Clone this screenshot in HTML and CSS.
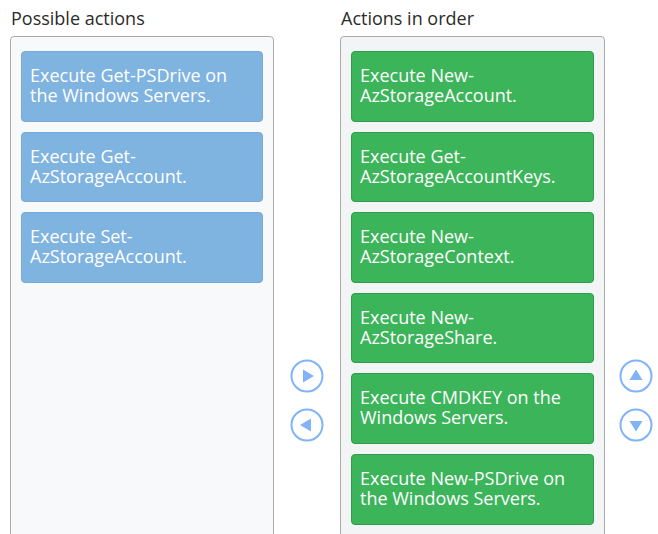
FILE: index.html
```html
<!DOCTYPE html>
<html>
<head>
<meta charset="utf-8">
<link rel="stylesheet" href="styles.css">
</head>
<body>
<div class="board">
  <div class="column">
    <div class="title">Possible actions</div>
    <div class="panel panel-source">
      <div class="card card-blue">Execute Get-PSDrive on the Windows Servers.</div>
      <div class="card card-blue">Execute Get-AzStorageAccount.</div>
      <div class="card card-blue">Execute Set-AzStorageAccount.</div>
    </div>
  </div>
  <div class="controls">
    <button class="circle-btn" aria-label="Move right">
      <svg width="34" height="34" viewBox="0 0 34 34"><circle cx="17" cy="17" r="15.5" fill="#fff" stroke="#80b3f8" stroke-width="2"/><path d="M13 10.5 L24 17 L13 23.5 Z" fill="#80b3f8"/></svg>
    </button>
    <button class="circle-btn" aria-label="Move left">
      <svg width="34" height="34" viewBox="0 0 34 34"><circle cx="17" cy="17" r="15.5" fill="#fff" stroke="#80b3f8" stroke-width="2"/><path d="M21 10.5 L10 17 L21 23.5 Z" fill="#80b3f8"/></svg>
    </button>
  </div>
  <div class="column">
    <div class="title">Actions in order</div>
    <div class="panel panel-target">
      <div class="card card-green">Execute New-AzStorageAccount.</div>
      <div class="card card-green">Execute Get-AzStorageAccountKeys.</div>
      <div class="card card-green">Execute New-AzStorageContext.</div>
      <div class="card card-green">Execute New-AzStorageShare.</div>
      <div class="card card-green">Execute CMDKEY on the Windows Servers.</div>
      <div class="card card-green">Execute New-PSDrive on the Windows Servers.</div>
    </div>
  </div>
  <div class="controls controls-right">
    <button class="circle-btn" aria-label="Move up">
      <svg width="34" height="34" viewBox="0 0 34 34"><circle cx="17" cy="17" r="15.5" fill="#fff" stroke="#80b3f8" stroke-width="2"/><path d="M10.5 21 L17 10.5 L23.5 21 Z" fill="#80b3f8"/></svg>
    </button>
    <button class="circle-btn" aria-label="Move down">
      <svg width="34" height="34" viewBox="0 0 34 34"><circle cx="17" cy="17" r="15.5" fill="#fff" stroke="#80b3f8" stroke-width="2"/><path d="M10.5 13 L17 23.5 L23.5 13 Z" fill="#80b3f8"/></svg>
    </button>
  </div>
</div>
</body>
</html>
```

FILE: styles.css
```css
html, body {
  margin: 0;
  padding: 0;
  background: #fff;
  overflow: hidden;
}

body {
  font-family: "Open Sans", "DejaVu Sans", sans-serif;
  color: #2b2b2b;
}

.board {
  display: flex;
  align-items: stretch;
  padding: 5px 0 0 10px;
  width: 658px;
  box-sizing: border-box;
}

.column {
  display: flex;
  flex-direction: column;
  width: 264px;
}

.title {
  font-size: 18px;
  line-height: 26px;
  height: 31px;
  padding-left: 1px;
}

.panel {
  border: 1px solid #aaaaaa;
  border-radius: 4px;
  padding: 14px 10px 14px 10px;
  display: flex;
  flex-direction: column;
  gap: 10px;
  height: 520px;
  box-sizing: border-box;
}

.panel-source {
  background: #f8f9fb;
}

.panel-target {
  background: #f3f4f6;
  width: 265px;
  box-sizing: border-box;
}

.card {
  height: 70.6px;
  flex-shrink: 0;
  box-sizing: border-box;
  border-radius: 4px;
  padding: 13px 12px 0 8px;
  font-size: 18px;
  line-height: 20px;
  color: #fff;
}

.card-blue {
  background: #7fb3e0;
  border: 1px solid #74a9d9;
}

.card-green {
  background: #3bb45a;
  border: 1px solid #2e9c4a;
}

.controls {
  width: 66px;
  flex-shrink: 0;
  display: flex;
  flex-direction: column;
  align-items: center;
  padding-top: 354px;
  gap: 15px;
}

.controls-right {
  width: 53px;
  align-items: flex-start;
  padding-left: 15px;
  box-sizing: border-box;
}

.circle-btn {
  width: 34px;
  height: 34px;
  padding: 0;
  border: none;
  background: transparent;
  display: block;
}

.circle-btn svg {
  display: block;
}
```
